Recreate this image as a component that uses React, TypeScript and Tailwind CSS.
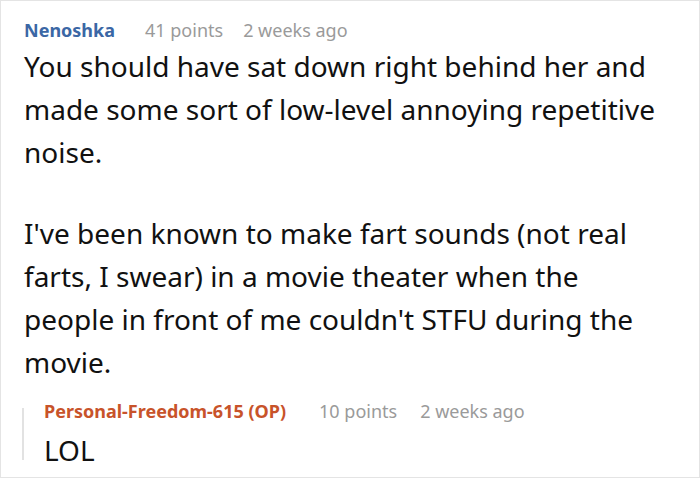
export default function App() {
  return (
    <div className="w-[700px] h-[478px] bg-white border border-[#e4e4e4] overflow-hidden font-['Noto_Sans',sans-serif]">
      <div className="pl-[23px] pt-[16px]">
        <div className="flex items-baseline text-[18px] leading-[26px]">
          <span className="font-bold text-[#3b67a5]">Nenoshka</span>
          <span className="ml-[30px] text-[#9a9a9a]">41 points</span>
          <span className="ml-[20px] text-[#9a9a9a]">2 weeks ago</span>
        </div>
        <div className="text-[28px] leading-[43px] text-[#111] mt-[2px] pr-[30px]">
          <p>You should have sat down right behind her and made some sort of low-level annoying repetitive noise.</p>
          <p className="mt-[38px]">
            I've been known to make fart sounds (not real farts, I swear) in a movie theater when the people in front of me couldn't STFU during the movie.
          </p>
        </div>
        <div className="mt-[16px] flex ml-[-2px]">
          <div className="w-[2px] bg-[#e2e2e2] mt-[8px] mb-[11px]" />
          <div className="pl-[20px]">
            <div className="flex items-baseline text-[18px] leading-[22px]">
              <span className="font-bold text-[#c8532a]">Personal-Freedom-615 (OP)</span>
              <span className="ml-[33px] text-[#9a9a9a]">10 points</span>
              <span className="ml-[23px] text-[#9a9a9a]">2 weeks ago</span>
            </div>
            <div className="text-[28px] leading-[42px] text-[#111] mt-[7px]">LOL</div>
          </div>
        </div>
      </div>
    </div>
  );
}
